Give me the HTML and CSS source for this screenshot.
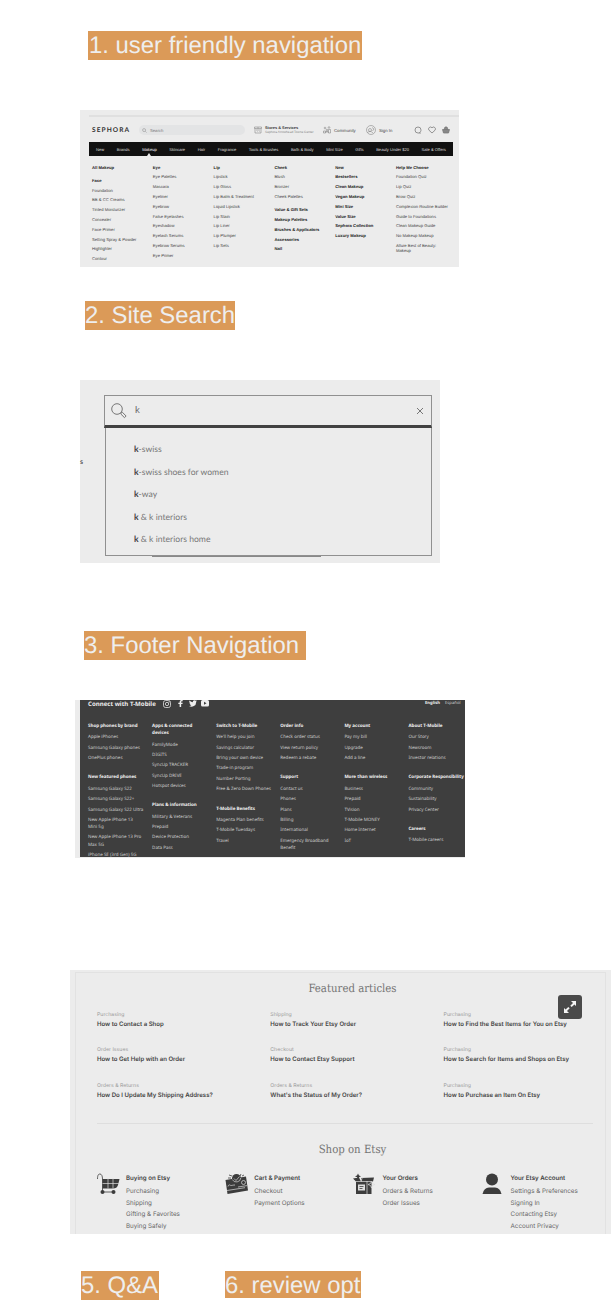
FILE: index.html
```html
<!DOCTYPE html>
<html lang="en">
<head>
<meta charset="utf-8">
<title>E-commerce navigation</title>
<link rel="stylesheet" href="styles.css">
</head>
<body>
<main class="page">
  <h2 class="tag tag-nav">1. user friendly navigation</h2>

  <section class="sephora">
    <div class="s-rule"></div>
    <header class="s-head">
      <span class="s-logo">SEPHORA</span>
      <div class="s-search">
        <svg viewBox="0 0 12 12"><circle cx="5" cy="5" r="3.6"/><path d="M8 8l3 3"/></svg>
        <span>Search</span>
      </div>
      <svg class="s-store" viewBox="0 0 16 16"><path d="M1 2h14v3H1zM2 5v9h12V5M4 8h8M6 11h1m3 0h1M8 2v3"/></svg>
      <div class="s-stores"><b>Stores &amp; Services</b><span>Sephora Arrowhead Towne Center</span></div>
      <svg class="s-comm" viewBox="0 0 16 16"><circle cx="4" cy="4" r="1.7"/><circle cx="12" cy="3" r="1.7"/><circle cx="8" cy="8" r="1.7"/><path d="M1 14v-4h4v4zM6 14v-3h4v3M11 14V7h4v7z"/></svg>
      <span class="s-link s-community">Community</span>
      <svg class="s-user" viewBox="0 0 20 20"><circle cx="10" cy="10" r="9"/><circle cx="8" cy="10" r="3"/><path d="M3 15c4-3 7-3 11 1M12 5l4 3-3 4"/></svg>
      <span class="s-link s-sign">Sign In</span>
      <svg class="s-act" viewBox="0 0 16 16"><path d="M13 14H8a6 6 0 1 1 6-6c0 2-1 4-3 5z"/></svg>
      <svg class="s-act" viewBox="0 0 16 16"><path d="M8 14L2 8.500a3.600 3.600 0 0 1 6-5 3.600 3.600 0 0 1 6 5z"/></svg>
      <svg class="s-act s-basket" viewBox="0 0 16 16"><path d="M1 7h14l-2 7H3zM4 7l2-5h4l2 5"/></svg>
    </header>
    <nav class="s-bar"><span>New</span><span>Brands</span><span class="active">Makeup</span><span>Skincare</span><span>Hair</span><span>Fragrance</span><span>Tools &amp; Brushes</span><span>Bath &amp; Body</span><span>Mini Size</span><span>Gifts</span><span>Beauty Under $20</span><span>Sale &amp; Offers</span></nav>
    <div class="s-cols">
      <ul><li class="b">All Makeup</li><li class="b gap">Face</li><li>Foundation</li><li>BB &amp; CC Creams</li><li>Tinted Moisturizer</li><li>Concealer</li><li>Face Primer</li><li>Setting Spray &amp; Powder</li><li>Highlighter</li><li>Contour</li></ul>
      <ul><li class="b">Eye</li><li>Eye Palettes</li><li>Mascara</li><li>Eyeliner</li><li>Eyebrow</li><li>False Eyelashes</li><li>Eyeshadow</li><li>Eyelash Serums</li><li>Eyebrow Serums</li><li>Eye Primer</li></ul>
      <ul><li class="b">Lip</li><li>Lipstick</li><li>Lip Gloss</li><li>Lip Balm &amp; Treatment</li><li>Liquid Lipstick</li><li>Lip Stain</li><li>Lip Liner</li><li>Lip Plumper</li><li>Lip Sets</li></ul>
      <ul><li class="b">Cheek</li><li>Blush</li><li>Bronzer</li><li>Cheek Palettes</li><li class="b gap">Value &amp; Gift Sets</li><li class="b">Makeup Palettes</li><li class="b">Brushes &amp; Applicators</li><li class="b">Accessories</li><li class="b">Nail</li></ul>
      <ul><li class="b">New</li><li class="b">Bestsellers</li><li class="b">Clean Makeup</li><li class="b">Vegan Makeup</li><li class="b">Mini Size</li><li class="b">Value Size</li><li class="b">Sephora Collection</li><li class="b">Luxury Makeup</li></ul>
      <ul><li class="b">Help Me Choose</li><li>Foundation Quiz</li><li>Lip Quiz</li><li>Brow Quiz</li><li>Complexion Routine Builder</li><li>Guide to Foundations</li><li>Clean Makeup Guide</li><li>No Makeup Makeup</li><li>Allure Best of Beauty:<br>Makeup</li></ul>
    </div>
  </section>

  <h2 class="tag tag-search">2. Site Search</h2>

  <section class="search">
    <div class="q-side">s</div>
    <div class="q-box">
      <div class="q-input">
        <svg class="q-glass" viewBox="0 0 16 16"><circle cx="6" cy="6" r="5.300"/><path d="M10 10l1.300-.8 3.800 3.800-1.600 1.700-3.800-3.800z"/></svg>
        <span class="q-text">k</span>
        <svg class="q-x" viewBox="0 0 8 8"><path d="M1 1l6 6M7 1L1 7"/></svg>
      </div>
      <ul class="q-list"><li><b>k</b>-swiss</li><li><b>k</b>-swiss shoes for women</li><li><b>k</b>-way</li><li><b>k</b> &amp; k interiors</li><li><b>k</b> &amp; k interiors home</li></ul>
      <div class="q-under"></div>
    </div>
  </section>

  <h2 class="tag tag-footer">3. Footer Navigation</h2>

  <section class="tmo">
    <div class="t-body">
      <div class="t-top">
        <b>Connect with T-Mobile</b>
        <svg class="t-ig" viewBox="0 0 16 16"><rect x="1" y="1" width="14" height="14" rx="4"/><circle cx="8" cy="8" r="3.300"/><circle cx="12" cy="4" r=".5"/></svg>
        <svg class="t-fb" viewBox="0 0 10 16"><path d="M3 16V9H0V6h3V4q0-4 4-4h3v3H8Q6.500 3 6.500 4.500V6H10L9.500 9h-3v7z"/></svg>
        <svg class="t-tw" viewBox="0 0 24 20"><path d="M24 2.400a10 10 0 0 1-2.800.8A5 5 0 0 0 23.300.5a10 10 0 0 1-3.100 1.200 4.900 4.900 0 0 0-8.400 4.500A14 14 0 0 1 1.700 1a4.900 4.900 0 0 0 1.500 6.600A5 5 0 0 1 1 7v.1a4.900 4.900 0 0 0 3.900 4.800 5 5 0 0 1-2.200.1 4.900 4.900 0 0 0 4.600 3.400A10 10 0 0 1 0 17.500 14 14 0 0 0 21.500 5z"/></svg>
        <svg class="t-yt" viewBox="0 0 16 13"><path fill-rule="evenodd" d="M3 0h10q3 0 3 3v7q0 3-3 3H3q-3 0-3-3V3q0-3 3-3zM6 3.500v6l5-3z"/></svg>
        <span class="t-lang"><b>English</b><span>Español</span></span>
      </div>
      <div class="t-cols">
        <div><h4>Shop phones by brand</h4><p>Apple iPhones</p><p>Samsung Galaxy phones</p><p>OnePlus phones</p><h4>New featured phones</h4><p>Samsung Galaxy S22</p><p>Samsung Galaxy S22+</p><p>Samsung Galaxy S22 Ultra</p><p>New Apple iPhone 13<br>Mini 5g</p><p>New Apple iPhone 13 Pro<br>Max 5G</p><p>iPhone SE (3rd Gen) 5G</p></div>
        <div><h4>Apps &amp; connected<br>devices</h4><p>FamilyMode</p><p>DIGITS</p><p>SyncUp TRACKER</p><p>SyncUp DRIVE</p><p>Hotspot devices</p><h4>Plans &amp; information</h4><p>Military &amp; Veterans</p><p>Prepaid</p><p>Device Protection</p><p>Data Pass</p></div>
        <div><h4>Switch to T-Mobile</h4><p>We'll help you join</p><p>Savings calculator</p><p>Bring your own device</p><p>Trade-in program</p><p>Number Porting</p><p>Free &amp; Zero Down Phones</p><h4>T-Mobile Benefits</h4><p>Magenta Plan benefits</p><p>T-Mobile Tuesdays</p><p>Travel</p></div>
        <div><h4>Order info</h4><p>Check order status</p><p>View return policy</p><p>Redeem a rebate</p><h4>Support</h4><p>Contact us</p><p>Phones</p><p>Plans</p><p>Billing</p><p>International</p><p>Emergency Broadband<br>Benefit</p></div>
        <div><h4>My account</h4><p>Pay my bill</p><p>Upgrade</p><p>Add a line</p><h4>More than wireless</h4><p>Business</p><p>Prepaid</p><p>TVision</p><p>T-Mobile MONEY</p><p>Home Internet</p><p>IoT</p></div>
        <div><h4>About T-Mobile</h4><p>Our Story</p><p>Newsroom</p><p>Investor relations</p><h4>Corporate Responsibility</h4><p>Community</p><p>Sustainability</p><p>Privacy Center</p><h4>Careers</h4><p>T-Mobile careers</p></div>
      </div>
    </div>
  </section>

  <section class="etsy">
    <div class="e-frame">
      <h3>Featured articles</h3>
      <div class="e-grid">
        <div><small>Purchasing</small><b>How to Contact a Shop</b></div><div><small>Shipping</small><b>How to Track Your Etsy Order</b></div><div><small>Purchasing</small><b>How to Find the Best Items for You on Etsy</b></div>
        <div><small>Order Issues</small><b>How to Get Help with an Order</b></div><div><small>Checkout</small><b>How to Contact Etsy Support</b></div><div><small>Purchasing</small><b>How to Search for Items and Shops on Etsy</b></div>
        <div><small>Orders &amp; Returns</small><b>How Do I Update My Shipping Address?</b></div><div><small>Orders &amp; Returns</small><b>What's the Status of My Order?</b></div><div><small>Purchasing</small><b>How to Purchase an Item On Etsy</b></div>
      </div>
      <div class="e-line"></div>
      <h3 class="e-shop">Shop on Etsy</h3>
      <div class="e-help">
        <div class="e-item">
          <svg viewBox="0 0 24 22"><path class="ln" d="M.5 6C.5 2 1.500 1 3 1S5.500 3 5.500 6v12"/><path d="M5.500 6H22.500L21 12q-1 3.500-5 3.500H5.500z"/><path class="cut" d="M11 5v10.500M16 5v10.500M5.500 10.500h17"/><path class="ln" d="M5 19h12"/><circle cx="5.500" cy="19" r="2"/><circle cx="16.500" cy="19" r="2"/></svg>
          <div><b>Buying on Etsy</b><p>Purchasing</p><p>Shipping</p><p>Gifting &amp; Favorites</p><p>Buying Safely</p></div>
        </div>
        <div class="e-item">
          <svg viewBox="0 0 24 22"><path d="M.5 7L21 3.500l2 14L2.500 21z"/><circle cx="11.500" cy="5.500" r="4.500"/><path class="cut" d="M7.300 6.500a4.500 4.500 0 0 0 8.500-1.500M9 5.500l2 2 3.500-4M3 13.500c1-3 2-1 3-1s2-.5 4-.5M2 17.500l18-2.800M13 14l9-1.400"/><circle class="cut" cx="18.500" cy="9.500" r="2"/><path class="ln" d="M4 2l3 1M6 5l-3 0M16 1l-1 2M19 2l-2 1"/></svg>
          <div><b>Cart &amp; Payment</b><p>Checkout</p><p>Payment Options</p></div>
        </div>
        <div class="e-item">
          <svg viewBox="0 0 24 22"><path d="M3 8.500h15.500V21H3zM0 5.500l6-1 2 4H3zM8 5l13-.5-1 4H9zM5 .5l1 2 2 .7-2 1-1 2-1-2-2-1 2-.7z"/><path class="cut" d="M3 8.500h15M14 8v13M8.500 7l1-3"/><path class="paper" d="M5 11.500h7v6H5z"/><path class="ln" d="M6.500 13.500h4M6.500 15.500h3"/><path d="M18.500 8l1 2.500 2.500 1-2.500 1-1 2.500-1-2.500-2.500-1 2.500-1z" class="cut"/></svg>
          <div><b>Your Orders</b><p>Orders &amp; Returns</p><p>Order Issues</p></div>
        </div>
        <div class="e-item">
          <svg viewBox="0 0 24 22"><circle cx="10" cy="6.500" r="6"/><path d="M.5 21q1.500-6.500 6.500-6.500h6q5 0 6.500 6.500z"/></svg>
          <div><b>Your Etsy Account</b><p>Settings &amp; Preferences</p><p>Signing In</p><p>Contacting Etsy</p><p>Account Privacy</p></div>
        </div>
      </div>
    </div>
    <button class="e-expand" aria-label="Expand"><svg viewBox="0 0 14 14"><path d="M8 1h5v5l-1.600-1.600-2.700 2.700-1.400-1.400L10 3zM6 13H1V8l1.600 1.600 2.700-2.700 1.400 1.400L4 11z"/></svg></button>
  </section>

  <div class="tag-row"><h2 class="tag tag-qa">5. Q&amp;A</h2><h2 class="tag tag-review">6. review opt</h2></div>
</main>
</body>
</html>
```
FILE: styles.css
```css
* { box-sizing: border-box; margin: 0; padding: 0; }
html, body { background: #fff; }
body { overflow: hidden; text-rendering: geometricPrecision; }
ul { list-style: none; }
svg { display: block; flex: none; fill: none; stroke: #777; }
.page { height: 1300px; overflow: hidden; display: flex; flex-direction: column; align-items: flex-start; }

/* Section labels */
.tag { flex: none; height: 29px; background: #db9a58; color: #eee; font: 400 23.900px/29px "Liberation Sans", Arial, sans-serif; white-space: nowrap; }
.tag-nav { margin: 31px 0 0 88px; width: 274px; padding-left: 1px; }
.tag-search { margin: 34px 0 0 85px; width: 150px; }
.tag-footer { margin: 68px 0 0 84px; width: 222px; }
.tag-row { display: flex; align-items: flex-start; gap: 66px; margin: 37px 0 0 81px; }
.tag-qa { width: 78px; }
.tag-review { width: 136px; height: 27px; }

/* Cosmetics mega menu */
.sephora { flex: none; width: 379px; height: 157px; margin: 50px 0 0 80px; padding: 5px 6px 0 9px; background: #ececec; font: 4.300px/5px "Liberation Sans", Arial, sans-serif; color: #444; }
.s-rule { height: 2px; background: #e0e0e0; margin-right: -6px; }
.s-head { display: flex; align-items: center; height: 25px; padding: 1px 2px 0 3px; white-space: nowrap; }
.s-logo { width: 47px; font: 700 6.600px/8px Lato, sans-serif; letter-spacing: 1.050px; color: #333; }
.s-search { display: flex; align-items: center; gap: 3px; width: 106px; height: 10px; padding-left: 3px; border-radius: 5px; background: #e3e4e5; color: #777; font-size: 4.200px; }
.s-search svg { width: 5px; height: 5px; }
.s-store { width: 8px; height: 8px; margin-left: 9px; }
.s-stores { width: 54px; margin-left: 3px; font-size: 3.900px; line-height: 4.500px; }
.s-stores b { color: #333; }
.s-stores b, .s-stores span { display: block; }
.s-stores span { font-size: 3.200px; color: #888; }
.s-comm { width: 8px; height: 8px; margin-left: 4px; }
.s-link { font-size: 4.300px; }
.s-community { width: 29px; margin-left: 3px; }
.s-user { width: 10px; height: 10px; margin-left: 3px; }
.s-sign { width: 35px; margin-left: 3px; }
.s-act { width: 8px; height: 8px; margin-right: 6px; stroke-width: 1.500; }
.s-basket { margin-right: 0; fill: #888; }
.s-bar { display: flex; align-items: center; justify-content: space-between; height: 14px; padding: 0 7px; background: #111; color: #ddd; font-size: 4.100px; white-space: nowrap; }
.active { position: relative; color: #fff; }
.active::after { content: ""; position: absolute; left: 5px; top: 6.500px; border: 2px solid transparent; border-top: 0; border-bottom: 3px solid #ececec; }
.s-cols { display: grid; grid-template-columns: repeat(6, 60.800px); padding: 6.600px 0 0 3px; white-space: nowrap; font-size: 4.200px; }
.s-cols li { min-height: 9.800px; line-height: 9.800px; }
.s-cols .b { font-weight: 700; color: #222; }
.s-cols .gap { margin-top: 3.500px; }
.s-cols ul:last-child li:last-child { line-height: 5px; padding-top: 2.400px; }

/* Search suggestions */
.search { flex: none; display: flex; width: 360px; height: 183px; margin: 50px 0 0 80px; padding-top: 15px; background: #ececec; font-family: Lato, sans-serif; }
.q-side { width: 24px; padding-top: 61px; font: 700 7px/12px Lato, sans-serif; color: #555; }
.q-box { width: 328px; }
.q-input { display: flex; align-items: center; height: 33px; padding: 0 7px 0 6px; border: 1px solid #909090; border-bottom: 3px solid #414141; }
.q-glass { width: 16px; height: 16px; stroke-width: 1; }
.q-text { flex: 1; padding: 0 0 0 8px; font-size: 9.500px; color: #666; }
.q-x { width: 8px; height: 8px; }
.q-list { height: 128px; margin: 0 0 0 1px; padding: 10px 0 0 28px; border: solid #909090; border-width: 0 1px 1px; font-size: 8.600px; line-height: 22.600px; color: #777; }
.q-list b { color: #444; }
.q-under { width: 169px; height: 1px; margin-left: 48px; background: #888; }

/* Mobile carrier footer */
.tmo { flex: none; width: 390px; height: 158px; margin: 40px 0 0 75px; padding: 0 0 1px 4.500px; background: #ececec; }
.t-body { height: 157px; overflow: hidden; background: #3e3e3e; color: #ccc; padding-left: 8.500px; font: 4.500px/7.200px "Noto Sans", sans-serif; white-space: nowrap; }
.t-top { display: flex; align-items: center; height: 7px; color: #eee; }
.t-top > b { width: 74.500px; font-size: 6.100px; line-height: 7px; }
.t-top svg { fill: #eee; stroke: none; }
.t-top .t-ig { width: 8px; height: 8px; fill: none; stroke: #eee; stroke-width: 1.500; }
.t-top .t-fb { width: 5px; height: 7px; margin-left: 7px; }
.t-top .t-tw { width: 8px; height: 7px; margin-left: 6px; }
.t-top .t-yt { width: 8px; height: 6.500px; margin-left: 4px; }
.t-lang { display: flex; gap: 5px; margin-left: auto; padding-right: 4.500px; font-size: 4.200px; line-height: 6px; }
.t-lang span { color: #ccc; }
.t-cols { display: grid; grid-template-columns: repeat(6, 64.100px); padding-top: 16px; }
.t-cols h4 { font-size: 4.500px; color: #f2f2f2; margin-bottom: 4.200px; }
.t-cols p { margin-bottom: 3.150px; }
.t-cols p + h4 { margin-top: 12.200px; }

/* Help center */
.etsy { position: relative; flex: none; width: 541px; height: 264px; margin: 112px 0 0 70px; padding: 2px 5px 0; background: #ececec; font-family: Inter, sans-serif; color: #444; white-space: nowrap; }
.e-frame { height: 262px; border: solid #e2e2e2; border-width: 1px 1px 0; padding: 8px 12px 0 21px; }
.e-frame h3 { width: 511px; font: 400 11.300px/16px "DejaVu Serif Condensed", "DejaVu Serif", serif; text-align: center; color: #747474; }
.e-grid { display: grid; grid-template-columns: repeat(3, 173.300px); grid-auto-rows: 35.700px; padding-top: 13.500px; }
.e-grid small, .e-grid b { display: block; }
.e-grid small { font-size: 5.200px; line-height: 9px; color: #999; }
.e-grid b { font-size: 6.060px; line-height: 10px; font-weight: 600; }
.e-line { height: 1px; background: #dedede; margin-top: 5px; }
.e-frame .e-shop { margin-top: 18px; }
.e-help { display: grid; grid-template-columns: repeat(4, 128.200px); padding-top: 15px; }
.e-item { display: flex; gap: 5px; font-size: 6.250px; line-height: 11.500px; color: #686868; }
.e-item b { display: block; line-height: 11px; margin-bottom: 2.500px; font-size: 6.150px; font-weight: 600; color: #444; }
.e-item svg { width: 24px; height: 22px; fill: #3c3c3c; stroke: none; }
.e-item .ln { fill: none; stroke: #3c3c3c; stroke-width: .8; }
.e-item .cut { fill: none; stroke: #ddd; stroke-width: .7; }
.e-item .paper { fill: #ddd; }
.e-expand { position: absolute; left: 487.500px; top: 25px; width: 24.500px; height: 24px; display: grid; place-items: center; border: 0; border-radius: 3px; background: #4a4a4a; }
.e-expand svg { width: 14px; height: 14px; fill: #f4f4f4; stroke: none; }
```
